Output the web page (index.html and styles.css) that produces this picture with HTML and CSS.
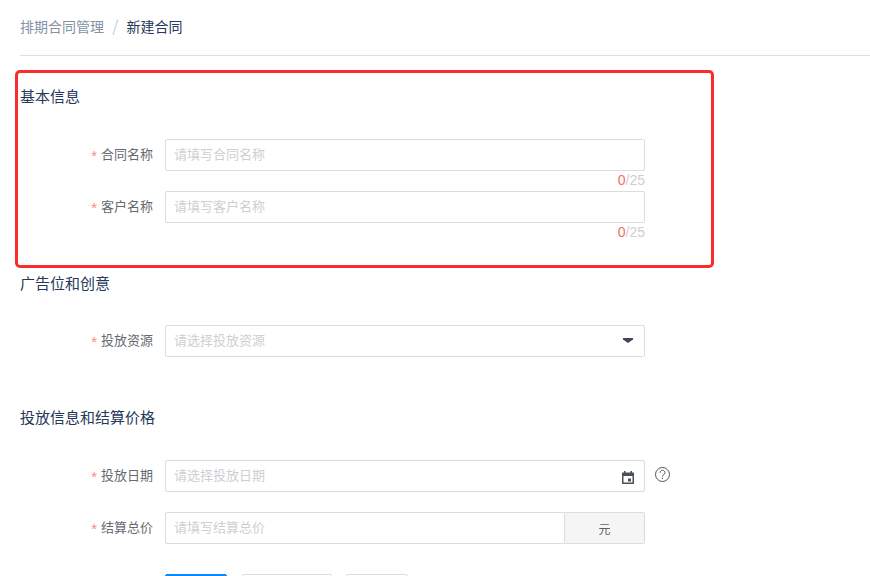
FILE: index.html
```html
<!DOCTYPE html>
<html lang="zh-CN">
<head>
    <meta charset="UTF-8">
    <meta name="viewport" content="width=device-width, initial-scale=1.0">
    <title>新建合同</title>
    <link rel="stylesheet" href="styles.css">
</head>
<body>
    <div class="breadcrumb">
        <span class="crumb-link">排期合同管理</span>
        <span class="crumb-sep">/</span>
        <span class="crumb-current">新建合同</span>
    </div>

    <div class="highlight"></div>

    <div class="section section-base">
        <h2>基本信息</h2>
        <div class="row">
            <label class="label" for="contractName"><i>*</i>合同名称</label>
            <div class="field">
                <input class="input" type="text" id="contractName" placeholder="请填写合同名称">
                <div class="count"><em>0</em>/25</div>
            </div>
        </div>
        <div class="row">
            <label class="label" for="customerName"><i>*</i>客户名称</label>
            <div class="field">
                <input class="input" type="text" id="customerName" placeholder="请填写客户名称">
                <div class="count"><em>0</em>/25</div>
            </div>
        </div>
    </div>

    <div class="section section-ad">
        <h2>广告位和创意</h2>
        <div class="row">
            <label class="label" for="resource"><i>*</i>投放资源</label>
            <div class="field">
                <input class="input" type="text" id="resource" placeholder="请选择投放资源">
                <svg class="caret" width="10" height="5" viewBox="0 0 10 5">
                    <path fill="#3f4654" d="M0 0h10v1.500L5 5 0 1.500z"/>
                </svg>
            </div>
        </div>
    </div>

    <div class="section section-price">
        <h2>投放信息和结算价格</h2>
        <div class="row">
            <label class="label" for="date"><i>*</i>投放日期</label>
            <div class="field">
                <input class="input" type="text" id="date" placeholder="请选择投放日期">
                <svg class="calendar" width="12" height="13" viewBox="0 0 12 13">
                    <path fill="#4a505c" d="M2 0h1.500v1.500h5V0H10v1.500h1.500c.3 0 .5.2.5.5v10.500c0 .3-.2.5-.5.5H.5c-.3 0-.5-.2-.5-.5V2c0-.3.2-.5.5-.5H2zM1.500 5v6.500h9V5z"/>
                    <rect fill="#4a505c" x="6" y="7.500" width="3" height="3"/>
                </svg>
                <svg class="help" width="15" height="15" viewBox="0 0 15 15" fill="none" stroke="#555">
                    <circle cx="7.500" cy="7.500" r="7"/>
                    <path d="M5 5.800C5 4.300 6.200 3.300 7.500 3.300S10 4.300 10 5.700c0 1.900-2.500 2-2.500 4"/>
                    <path d="M7.500 10.700v1.300"/>
                </svg>
            </div>
        </div>
        <div class="row">
            <label class="label" for="price"><i>*</i>结算总价</label>
            <div class="field input-group">
                <input class="input" type="text" id="price" placeholder="请填写结算总价">
                <span class="addon">元</span>
            </div>
        </div>
    </div>

    <div class="actions">
        <button class="btn btn-primary"></button>
        <button class="btn btn-draft"></button>
        <button class="btn btn-cancel"></button>
    </div>
</body>
</html>
```

FILE: styles.css
```css
html, body {
    height: 576px;
    overflow: hidden;
}
body {
    margin: 0;
    padding-left: 20px;
    position: relative;
    background: #fff;
    font-family: "Noto Sans CJK SC", "Liberation Sans", sans-serif;
    font-size: 13px;
    color: #606266;
}
.breadcrumb {
    height: 55px;
    line-height: 50px;
    border-bottom: 1px solid #dfdfdf;
    font-size: 14px;
    box-sizing: content-box;
}
.crumb-link {
    color: #8492a6;
}
.crumb-sep {
    color: #c9cdd4;
    margin: 0 5px;
    font-size: 16px;
}
.crumb-current {
    color: #253858;
}
.highlight {
    position: absolute;
    left: 15px;
    top: 70px;
    width: 693px;
    height: 192px;
    border: 3px solid #fb2c2c;
    border-radius: 5px;
}
h2 {
    margin: 0;
    font-size: 15px;
    font-weight: 400;
    line-height: 24px;
    color: #253858;
}
.section-base {
    padding-top: 28px;
}
.section-base h2 {
    margin-bottom: 31px;
}
.section-ad {
    padding-top: 28px;
}
.section-ad h2 {
    margin-bottom: 30px;
}
.section-price {
    padding-top: 28px;
}
.section-price h2 {
    margin-bottom: 31px;
}
.row {
    display: flex;
    height: 32px;
    margin-bottom: 20px;
}
.label {
    width: 133px;
    text-align: right;
    line-height: 30px;
    color: #666a70;
    white-space: nowrap;
}
.label i {
    font-style: normal;
    font-family: "Liberation Sans", sans-serif;
    font-size: 15px;
    line-height: 0;
    vertical-align: -2px;
    color: #f98a8a;
    margin-right: 4px;
}
.field {
    position: relative;
    width: 480px;
    margin-left: 12px;
}
.input {
    display: block;
    width: 100%;
    height: 32px;
    padding: 0 8px 4px;
    box-sizing: border-box;
    border: 1px solid #dcdcdc;
    border-radius: 2px;
    outline: none;
    font: inherit;
    color: #606266;
}
.input::placeholder {
    color: #cdcfd3;
    opacity: 1;
}
.count {
    position: absolute;
    right: 0;
    top: 32px;
    line-height: 18px;
    font-size: 14px;
    font-family: "Liberation Sans", sans-serif;
    color: #cfcfcf;
}
.count em {
    font-style: normal;
    color: #f56c6c;
}
.caret {
    position: absolute;
    right: 12px;
    top: 13px;
}
.calendar {
    position: absolute;
    right: 11px;
    top: 11px;
}
.help {
    position: absolute;
    left: 490px;
    top: 7px;
}
.input-group {
    display: flex;
}
.input-group .input {
    flex: 1;
    border-radius: 2px 0 0 2px;
    min-width: 0;
}
.addon {
    width: 80px;
    box-sizing: border-box;
    border: 1px solid #dcdcdc;
    border-left: 0;
    border-radius: 0 2px 2px 0;
    background: #f5f5f5;
    text-align: center;
    line-height: 32px;
    font-size: 12px;
}
.actions {
    display: flex;
    gap: 15px;
    margin-left: 145px;
    padding-top: 10px;
}
.btn {
    height: 32px;
    padding: 0;
    border-radius: 2px;
    background: #fff;
    border: 1px solid #dcdcdc;
}
.btn-primary {
    width: 62px;
    background: #0a84ff;
    border-color: #0a84ff;
}
.btn-draft {
    width: 90px;
}
.btn-cancel {
    width: 62px;
    margin-left: -1px;
}
```
